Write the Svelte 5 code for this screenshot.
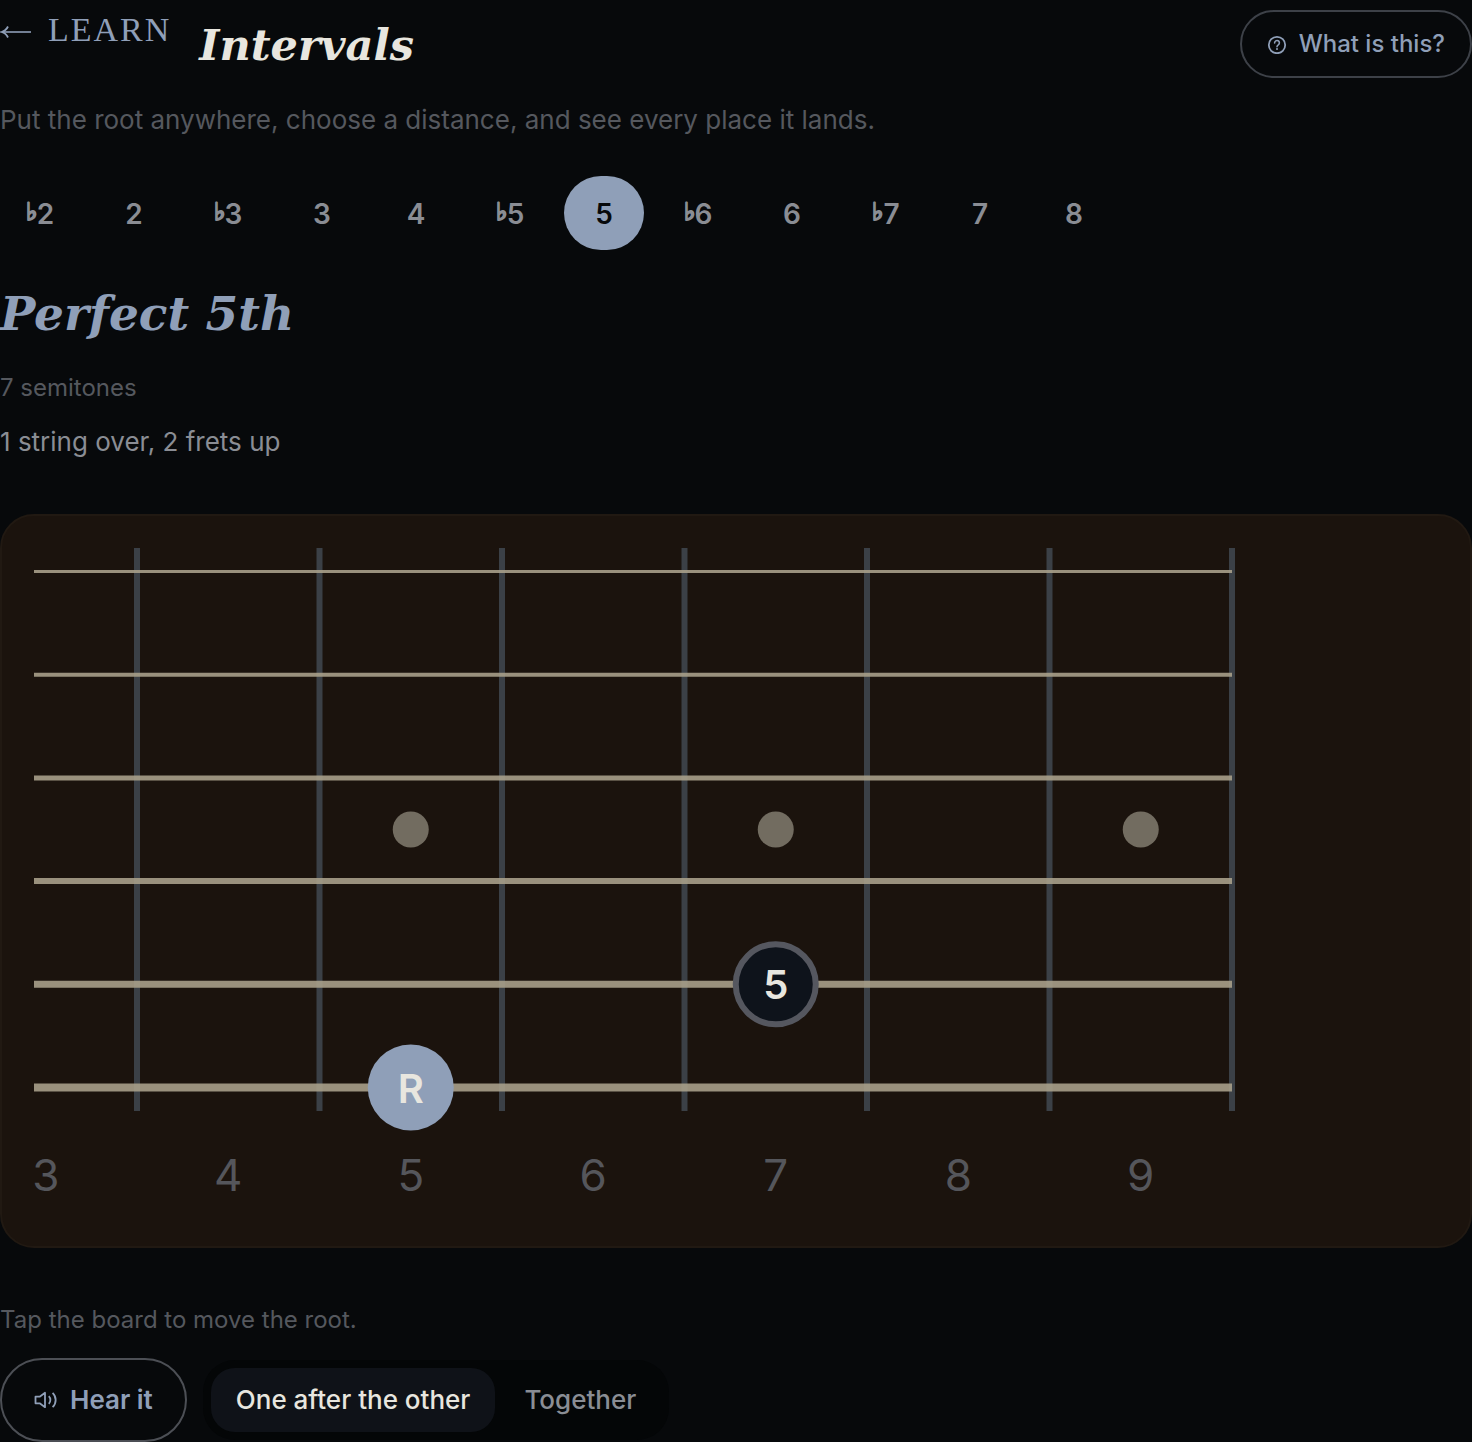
<script lang="ts">
	interface Interval {
		flat: boolean;
		degree: string;
		name: string;
		semitones: number;
	}

	interface Place {
		string: number;
		fret: number;
	}

	const INTERVALS: Interval[] = [
		{ flat: true, degree: '2', name: 'Minor 2nd', semitones: 1 },
		{ flat: false, degree: '2', name: 'Major 2nd', semitones: 2 },
		{ flat: true, degree: '3', name: 'Minor 3rd', semitones: 3 },
		{ flat: false, degree: '3', name: 'Major 3rd', semitones: 4 },
		{ flat: false, degree: '4', name: 'Perfect 4th', semitones: 5 },
		{ flat: true, degree: '5', name: 'Diminished 5th', semitones: 6 },
		{ flat: false, degree: '5', name: 'Perfect 5th', semitones: 7 },
		{ flat: true, degree: '6', name: 'Minor 6th', semitones: 8 },
		{ flat: false, degree: '6', name: 'Major 6th', semitones: 9 },
		{ flat: true, degree: '7', name: 'Minor 7th', semitones: 10 },
		{ flat: false, degree: '7', name: 'Major 7th', semitones: 11 },
		{ flat: false, degree: '8', name: 'Octave', semitones: 12 }
	];

	// high string first, in semitones above the low E
	const TUNING = [24, 19, 15, 10, 5, 0];
	const INLAYS = [3, 5, 7, 9, 15, 17, 19, 21];

	const FRET_GAP = 182.5;
	const FRET_START = 103;
	const STRING_GAP = 103.2;
	const STRING_TOP = 23.5;
	const NECK_WIDTH = 1198;
	const FRET_COUNT = 7;

	let selectedIndex = $state(6);
	let root: Place = $state({ string: 5, fret: 5 });
	let together = $state(false);

	let selected = $derived(INTERVALS[selectedIndex]);
	let firstFret = $derived(Math.max(0, root.fret - 2));
	let frets = $derived(Array.from({ length: FRET_COUNT }, (_, i) => firstFret + i));

	let places = $derived(
		TUNING.map((open, string) => ({
			string,
			fret: TUNING[root.string] + root.fret + selected.semitones - open
		})).filter((p) => p.fret >= firstFret && p.fret < firstFret + FRET_COUNT)
	);

	let shape = $derived.by(() => {
		const place = places[places.length - 1];
		if (!place) return 'Off this part of the neck';

		const over = root.string - place.string;
		const up = place.fret - root.fret;
		const strings = over === 0 ? 'Same string' : `${over} string${over === 1 ? '' : 's'} over`;
		if (up === 0) return `${strings}, same fret`;

		const n = Math.abs(up);
		return `${strings}, ${n} fret${n === 1 ? '' : 's'} ${up > 0 ? 'up' : 'down'}`;
	});

	function fretX(fret: number) {
		return FRET_START - FRET_GAP / 2 + (fret - firstFret) * FRET_GAP;
	}

	function stringY(string: number) {
		return STRING_TOP + string * STRING_GAP;
	}

	function moveRoot(e: MouseEvent) {
		const box = (e.currentTarget as Element).getBoundingClientRect();
		const string = Math.round((e.clientY - box.top - STRING_TOP) / STRING_GAP);
		const column = Math.floor((e.clientX - box.left - FRET_START) / FRET_GAP) + 1;

		root = {
			string: Math.min(5, Math.max(0, string)),
			fret: firstFret + Math.min(FRET_COUNT - 1, Math.max(0, column))
		};
	}
</script>

<main>
	<header>
		<a class="back" href="/learn">
			<svg width="32" height="24" viewBox="0 0 32 24" fill="none" stroke="currentColor" aria-hidden="true">
				<path d="M2 14h29" stroke-width="1.6" />
				<path d="M8 8.5C6.6 11.4 4.6 13.2 1.6 14c3 .8 5 2.6 6.4 5.5" stroke-width="1.8" />
			</svg>
			LEARN
		</a>
		<h1>Intervals</h1>
		<button class="help" type="button">
			<svg width="20" height="20" viewBox="0 0 20 20" fill="none" stroke="currentColor" aria-hidden="true">
				<circle cx="10" cy="11" r="8.2" stroke-width="1.8" />
				<path
					d="M7.6 8.9a2.4 2.4 0 1 1 3.7 2c-.8.5-1.3.9-1.3 1.8"
					stroke-width="1.6"
					stroke-linecap="round"
				/>
				<circle cx="10" cy="15.1" r="1" fill="currentColor" stroke="none" />
			</svg>
			What is this?
		</button>
	</header>

	<p class="intro">Put the root anywhere, choose a distance, and see every place it lands.</p>

	<div class="intervals" role="group" aria-label="Interval">
		{#each INTERVALS as interval, i}
			<button
				type="button"
				class:active={i === selectedIndex}
				aria-pressed={i === selectedIndex}
				onclick={() => (selectedIndex = i)}
			>
				{#if interval.flat}<span class="flat">♭</span>{/if}{interval.degree}
			</button>
		{/each}
	</div>

	<h2>{selected.name}</h2>
	<p class="semitones">{selected.semitones} semitone{selected.semitones === 1 ? '' : 's'}</p>
	<p class="shape">{shape}</p>

	<div class="board">
		<!-- svelte-ignore a11y_click_events_have_key_events, a11y_no_noninteractive_element_interactions -->
		<svg width="1201" height="666" viewBox="0 0 1201 666" role="img" aria-label="Fretboard" onclick={moveRoot}>
			{#each frets as _, i}
				<line
					class="fret"
					x1={FRET_START + i * FRET_GAP}
					x2={FRET_START + i * FRET_GAP}
					y1="0"
					y2="563"
				/>
			{/each}
			{#each frets.slice(1) as fret}
				{#if INLAYS.includes(fret)}
					<circle class="inlay" cx={fretX(fret)} cy={stringY(2.5)} r="18" />
				{/if}
			{/each}
			{#each TUNING as _, string}
				<line
					class="string"
					x1="0"
					x2={NECK_WIDTH}
					y1={stringY(string)}
					y2={stringY(string)}
					stroke-width={3 + string}
				/>
			{/each}
			{#each frets as fret}
				<text class="number" x={fretX(fret)} y="643">{fret}</text>
			{/each}
			{#each places as place}
				<circle class="note" cx={fretX(place.fret)} cy={stringY(place.string)} r="40" />
				<text class="label" x={fretX(place.fret)} y={stringY(place.string) + 15}
					>{selected.flat ? '♭' : ''}{selected.degree}</text
				>
			{/each}
			<circle class="root" cx={fretX(root.fret)} cy={stringY(root.string)} r="43" />
			<text class="label" x={fretX(root.fret)} y={stringY(root.string) + 15}>R</text>
		</svg>
	</div>

	<p class="hint">Tap the board to move the root.</p>

	<div class="controls">
		<button class="hear" type="button">
			<svg
				width="24"
				height="20"
				viewBox="0 0 24 20"
				fill="none"
				stroke="currentColor"
				stroke-width="1.8"
				stroke-linejoin="round"
				aria-hidden="true"
			>
				<path d="M1.5 6.7h4.2L11 2.8v14.4l-5.3-3.9H1.5z" />
				<path d="M14.8 6.2a5.4 5.4 0 0 1 0 7.6" />
				<path d="M18.6 2.8a10 10 0 0 1 0 14.4" />
			</svg>
			Hear it
		</button>
		<div class="mode" role="group" aria-label="Playback">
			<button type="button" class:active={!together} onclick={() => (together = false)}>
				One after the other
			</button>
			<button type="button" class:active={together} onclick={() => (together = true)}>
				Together
			</button>
		</div>
	</div>
</main>

<style>
	:global(body) {
		background: #07090b;
	}

	main {
		color: #e8e6df;
		font-family: Inter, 'Liberation Sans', sans-serif;
		font-size: 26px;
		line-height: 32px;
	}

	h1,
	h2,
	p {
		margin: 0;
	}

	button {
		border: none;
		background: none;
		padding: 0;
		font: inherit;
		color: #8a8d94;
		cursor: pointer;
	}

	header {
		display: flex;
		align-items: flex-start;
		gap: 28px;
		padding-top: 10px;
	}

	.back {
		display: flex;
		align-items: center;
		gap: 16px;
		color: #8f9fb8;
		font-family: 'Liberation Serif', serif;
		font-size: 34px;
		line-height: 40px;
		letter-spacing: 2px;
		text-decoration: none;
	}

	h1,
	h2 {
		font-family: Georgia, 'DejaVu Serif', serif;
		font-style: italic;
		font-weight: 700;
	}

	h1 {
		font-size: 43px;
		line-height: 70px;
	}

	.help {
		display: flex;
		align-items: center;
		gap: 12px;
		height: 68px;
		margin-left: auto;
		padding: 0 25px;
		border: 2px solid #3d4148;
		border-radius: 34px;
		color: #8f9fb8;
		font-size: 24px;
		font-weight: 500;
	}

	.intro {
		margin-top: 24px;
		color: #55585e;
	}

	.intervals {
		display: flex;
		flex-wrap: wrap;
		gap: 14px;
		margin-top: 40px;
	}

	.intervals button {
		width: 80px;
		height: 74px;
		padding-top: 2px;
		border-radius: 37px;
		font-weight: 600;
		font-size: 28px;
	}

	.intervals button.active {
		background: #8f9fb8;
		color: #07090b;
	}

	.flat {
		font-size: 24px;
		line-height: 24px;
		vertical-align: 4px;
		-webkit-text-stroke: 1px currentColor;
	}

	h2 {
		margin-top: 32px;
		color: #8f9fb8;
		font-size: 47px;
		line-height: 64px;
	}

	.semitones {
		margin-top: 26px;
		color: #55585e;
		font-size: 24px;
	}

	.shape {
		margin-top: 22px;
		color: #8a8d94;
	}

	.board {
		margin-top: 56px;
		padding: 32px;
		border: 2px solid #211912;
		border-radius: 34px;
		background: #1b130d;
		overflow: hidden;
	}

	.board svg {
		display: block;
		overflow: visible;
		cursor: pointer;
	}

	.fret {
		stroke: #3b4046;
		stroke-width: 6;
	}

	.string {
		stroke: #a9a089;
		stroke-opacity: 0.9;
	}

	.inlay {
		fill: #726c60;
	}

	.number,
	.label {
		text-anchor: middle;
	}

	.number {
		fill: #55565b;
		font-size: 44px;
	}

	.note {
		fill: #0e131b;
		stroke: #55575f;
		stroke-width: 6;
	}

	.root {
		fill: #8f9fb8;
	}

	.label {
		fill: #e8e6df;
		font-size: 40px;
		font-weight: 600;
	}

	.hint {
		margin-top: 56px;
		color: #55585e;
		font-size: 24px;
	}

	.controls {
		display: flex;
		align-items: center;
		gap: 16px;
		margin-top: 22px;
	}

	.hear {
		display: flex;
		align-items: center;
		gap: 12px;
		height: 84px;
		padding: 0 32px;
		border: 2px solid #4c4f55;
		border-radius: 42px;
		color: #8f9fb8;
		font-weight: 600;
	}

	.mode {
		display: flex;
		gap: 4px;
		padding: 8px;
		border-radius: 32px;
		background: #040607;
	}

	.mode button {
		height: 64px;
		padding: 0 25px;
		border-radius: 24px;
		font-weight: 500;
	}

	.mode button.active {
		background: #0f1218;
		color: #e8e6df;
	}
</style>
